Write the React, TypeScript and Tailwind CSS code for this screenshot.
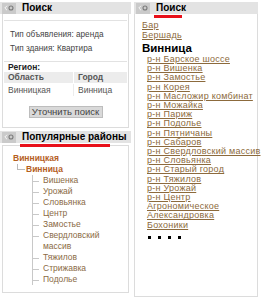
import React from "react";

const districts = [
  "р-н Барское шоссе",
  "р-н Вишенка",
  "р-н Замостье",
  "р-н Корея",
  "р-н Масложир комбинат",
  "р-н Можайка",
  "р-н Париж",
  "р-н Подолье",
  "р-н Пятничаны",
  "р-н Сабаров",
  "р-н Свердловский массив",
  "р-н Словьянка",
  "р-н Старый город",
  "р-н Тяжилов",
  "р-н Урожай",
  "р-н Центр",
  "Агрономическое",
  "Александровка",
  "Бохоники",
];

const popular = ["Вишенка", "Урожай", "Словьянка", "Центр", "Замостье", "Свердловский массив", "Тяжилов", "Стрижавка", "Подолье"];

function HeaderIcon() {
  return (
    <div className="flex h-[11px] w-[14px] items-center justify-center bg-[#cacaca]">
      <svg width="10" height="6" viewBox="0 0 10 6">
        <path d="M3 0.8 L0.8 3 L3 5.2" fill="none" stroke="#f4f4f4" strokeWidth="1" />
        <circle cx="7" cy="3" r="2" fill="none" stroke="#7a7a7a" strokeWidth="1.1" />
      </svg>
    </div>
  );
}

function Header({ title, mark }: { title: string; mark: string }) {
  return (
    <div className="relative flex h-[12px] items-center bg-[#e3e3e3] pl-[2px]">
      <HeaderIcon />
      <span className="ml-[6px] text-[10px] font-bold leading-none text-black">{title}</span>
      <div className={`absolute top-[13px] h-[3px] bg-[#e8101a] ${mark}`} />
    </div>
  );
}

export default function App() {
  return (
    <div
      className="flex h-[299px] w-[262px] overflow-hidden bg-white pt-[2px]"
      style={{ fontFamily: '"Liberation Sans", Arial, sans-serif' }}
    >
      <div className="flex w-[131px] flex-col">
        <Header title="Поиск" mark="left-[22px] w-0" />
        <div className="mx-[2px] flex h-[114px] flex-col border border-t-0 border-[#dcdcdc] px-[1px] pt-[6px]">
          <div className="border-t border-[#e2e2e2] px-[6px] pt-[7px] text-[8.2px] leading-[14px] text-[#444]">
            <div>Тип объявления: аренда</div>
            <div>Тип здания: Квартира</div>
          </div>
          <div className="mt-[5px] border-t border-[#e2e2e2] px-[4px] text-[8.5px] font-bold leading-[10px] text-[#222]">
            Регион:
          </div>
          <div className="text-[8.5px] text-[#555]">
            <div className="flex h-[11px] items-center bg-[#ececec]">
              <span className="w-[70px] border-r border-white pl-[4px] font-bold">Область</span>
              <span className="pl-[4px] font-bold">Город</span>
            </div>
            <div className="flex h-[14px] items-center">
              <span className="w-[70px] border-r border-[#ececec] pl-[4px]">Винницкая</span>
              <span className="pl-[4px]">Винница</span>
            </div>
          </div>
          <div className="mt-[9px] flex justify-center">
            <div className="flex h-[12px] w-[74px] items-center justify-center border border-[#bdbdbd] bg-[#d9d9d9] text-[9.5px] text-[#444]">
              Уточнить поиск
            </div>
          </div>
        </div>
        <div className="mt-[3px]">
          <Header title="Популярные районы" mark="left-[20px] w-[90px]" />
        </div>
        <div className="mx-[2px] mt-[2px] h-[148px] border border-[#dcdcdc] pl-[10px] pt-[7px] text-[8.5px] leading-[11px]">
          <div className="font-bold text-[#b5601f]">Винницкая</div>
          <div className="flex items-center">
            <div className="mb-[5px] ml-[4px] h-[6px] w-[8px] border-b border-l border-[#bbb]" />
            <span className="ml-[1px] font-bold text-[#b5601f]">Винница</span>
          </div>
          <div className="ml-[19px] border-l border-[#c8c8c8]">
            {popular.map((p) => (
              <div key={p} className="flex">
                <div className="mt-[6px] h-[1px] w-[6px] shrink-0 bg-[#c8c8c8]" />
                <span className="ml-[4px] w-[60px] text-[#8a6a45]">{p}</span>
              </div>
            ))}
          </div>
        </div>
      </div>
      <div className="ml-[3px] flex w-[124px] flex-col">
        <Header title="Поиск" mark="left-[20px] w-[28px]" />
        <div className="h-[283px] border border-t-0 border-[#dcdcdc] pl-[7px] pt-[6px] text-[9px] leading-[10px] tracking-[0.25px] text-[#8c6a3c]">
          <div className="underline">Бар</div>
          <div className="underline">Бершадь</div>
          <div className="mt-[2px] text-[11.5px] font-bold leading-[13px] tracking-normal text-black">Винница</div>
          <div className="pl-[5px] leading-[9.2px]">
            {districts.map((d) => (
              <div key={d} className="whitespace-nowrap underline">
                {d}
              </div>
            ))}
            <div className="mt-[6px] flex gap-[7px] pl-[1px]">
              <span className="h-[3px] w-[3px] bg-black" />
              <span className="h-[3px] w-[3px] bg-black" />
              <span className="h-[3px] w-[3px] bg-black" />
              <span className="h-[3px] w-[3px] bg-black" />
            </div>
          </div>
        </div>
      </div>
    </div>
  );
}
